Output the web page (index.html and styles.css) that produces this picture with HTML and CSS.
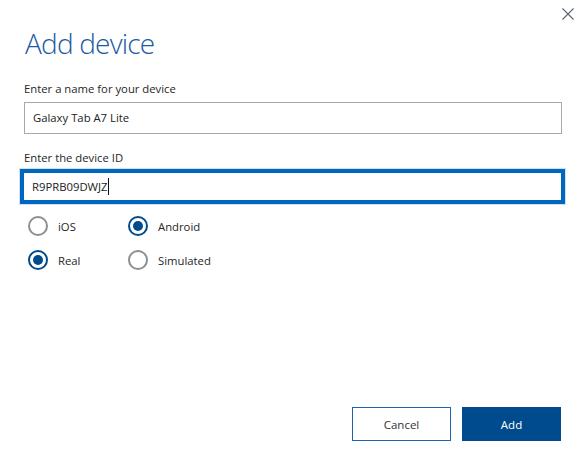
FILE: index.html
```html
<!DOCTYPE html>
<html lang="en">
<head>
<meta charset="utf-8">
<title>Add device</title>
<link rel="stylesheet" href="styles.css">
</head>
<body>
<div class="dialog">
  <button class="close" aria-label="Close">
    <svg width="12" height="12" viewBox="0 0 12 12"><path d="M0.5 0.5 L11.5 11.5 M11.5 0.5 L0.5 11.5" stroke="#5c6570" stroke-width="1.1" fill="none"/></svg>
  </button>
  <h1 class="title">Add device</h1>
  <div class="field name-field">
    <label class="label">Enter a name for your device</label>
    <div class="input">Galaxy Tab A7 Lite</div>
  </div>
  <div class="field id-field">
    <label class="label">Enter the device ID</label>
    <div class="input focused">R9PRB09DWJZ<span class="caret"></span></div>
  </div>
  <div class="radios">
    <div class="radio"><span class="circle"></span><span class="rlabel">iOS</span></div>
    <div class="radio"><span class="circle checked"></span><span class="rlabel">Android</span></div>
    <div class="radio"><span class="circle checked"></span><span class="rlabel">Real</span></div>
    <div class="radio"><span class="circle"></span><span class="rlabel">Simulated</span></div>
  </div>
  <div class="actions">
    <button class="btn cancel">Cancel</button>
    <button class="btn primary">Add</button>
  </div>
</div>
</body>
</html>
```
FILE: styles.css
```css
html, body {
  margin: 0;
  padding: 0;
  background: #ffffff;
}
.dialog {
  position: relative;
  box-sizing: border-box;
  width: 587px;
  height: 458px;
  padding: 0 26px 17px 24px;
  display: flex;
  flex-direction: column;
  font-family: "Open Sans", "Noto Sans", sans-serif;
  color: #222;
}
.close {
  position: absolute;
  top: 8px;
  right: 13px;
  width: 12px;
  height: 12px;
  padding: 0;
  border: none;
  background: none;
  display: block;
}
.close svg { display: block; }
.title {
  margin: 23px 0 0 1px;
  font-weight: 300;
  font-size: 28px;
  line-height: 40px;
  color: #1b5aa2;
  letter-spacing: -0.8px;
}
.field {
  display: flex;
  flex-direction: column;
}
.name-field { margin-top: 18px; }
.id-field { margin-top: 16px; }
.label {
  font-size: 11.3px;
  line-height: 16px;
  color: #262626;
}
.input {
  box-sizing: border-box;
  width: 538px;
  height: 32px;
  margin-top: 5px;
  border: 1px solid #a3a9b0;
  padding: 0 8px;
  font-size: 11.3px;
  line-height: 30px;
  color: #222;
  display: flex;
  align-items: center;
}
.input.focused {
  width: 545px;
  height: 35px;
  margin-left: -4px;
  margin-top: 3px;
  border: 4px solid #0067c0;
  box-shadow: 0 0 0 1px #cfe0f2;
  padding-left: 8px;
}
.caret {
  display: inline-block;
  width: 1px;
  height: 17px;
  background: #111;
}
.radios {
  margin-top: 12px;
  margin-left: 4px;
  display: grid;
  grid-template-columns: 100px 100px;
  row-gap: 14px;
}
.radio {
  display: flex;
  align-items: center;
  height: 20px;
}
.circle {
  box-sizing: border-box;
  width: 20px;
  height: 20px;
  border-radius: 50%;
  border: 2px solid #8c8f93;
  background: #fff;
  display: flex;
  align-items: center;
  justify-content: center;
}
.circle.checked {
  border-color: #004b8d;
}
.circle.checked::after {
  content: "";
  width: 10px;
  height: 10px;
  border-radius: 50%;
  background: #004b8d;
}
.rlabel {
  margin-left: 10px;
  font-size: 11.3px;
  color: #262626;
}
.actions {
  margin-top: auto;
  display: flex;
  justify-content: flex-end;
  gap: 11px;
}
.btn {
  box-sizing: border-box;
  width: 99px;
  height: 34px;
  font-family: "Open Sans", "Noto Sans", sans-serif;
  font-size: 11.5px;
  border-radius: 0;
  padding: 0;
}
.cancel {
  background: #fff;
  border: 1px solid #1f63ad;
  color: #333;
}
.primary {
  background: #004b8d;
  border: 1px solid #004b8d;
  color: #fff;
}
```
